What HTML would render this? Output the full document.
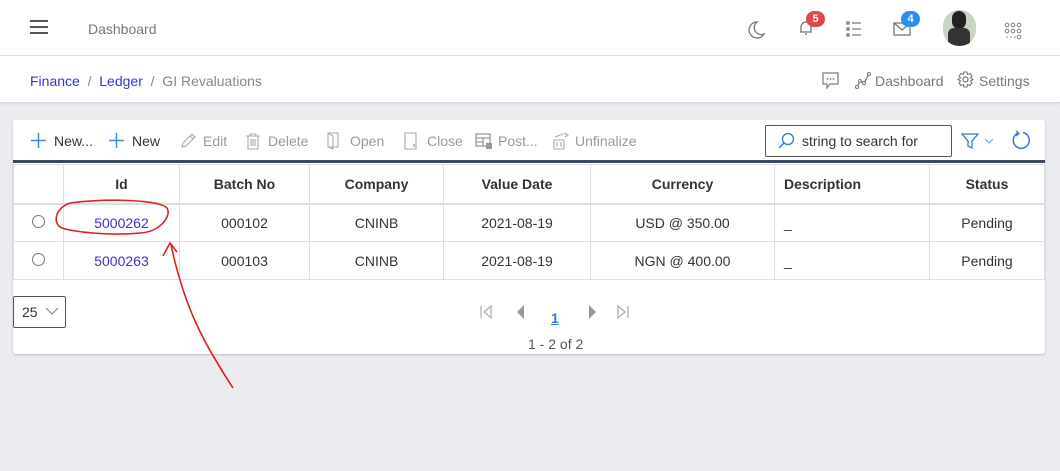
<!DOCTYPE html>
<html><head><meta charset="utf-8"><style>
*{box-sizing:border-box;margin:0;padding:0}
body{width:1060px;height:471px;background:#ebecef;font-family:"Liberation Sans",sans-serif;position:relative;overflow:hidden;color:#333}
.top{position:absolute;left:0;top:0;width:1060px;height:56px;background:#fff;border-bottom:1px solid #ddd}
.bc{position:absolute;left:0;top:56px;width:1060px;height:47px;background:#fff;border-bottom:1px solid #d5d7dc;box-shadow:0 1px 2px rgba(0,0,0,.08)}
.t{position:absolute;white-space:nowrap;font-size:14px}
.card{position:absolute;left:13px;top:120px;width:1032px;height:234px;background:#fff;border-radius:3px;box-shadow:0 1px 2px rgba(0,0,0,.2)}
table{position:absolute;left:0;top:44px;border-collapse:collapse;font-size:14px}
td,th{border:1px solid #dcdee3;text-align:center;height:38px}
th{font-weight:bold;color:#333;height:39px;border-bottom:2px solid #dcdee3}
.tb{color:#999;font-size:14px;top:13px}
.ic{position:absolute;top:12px}
</style></head><body>
<div class="top">
 <div style="position:absolute;left:30px;top:20px;width:18px;height:2px;background:#555;box-shadow:0 6px 0 #555,0 12px 0 #555"></div>
 <div class="t" style="left:88px;top:21px;color:#777">Dashboard</div>
 <svg style="position:absolute;left:748px;top:20px" width="18" height="20" viewBox="0 0 18 20"><path d="M9 2 A8 8 0 1 0 16 14 A7 7 0 0 1 9 2Z" fill="none" stroke="#777" stroke-width="1.3"/></svg>
 <svg style="position:absolute;left:797px;top:18px" width="18" height="20" viewBox="0 0 18 20"><path d="M4 14 V9 A5 5 0 0 1 14 9 V14 H3 M8 16 H10" fill="none" stroke="#777" stroke-width="1.3"/></svg>
 <div style="position:absolute;left:806px;top:11px;width:19px;height:16px;border-radius:8px;background:#e0474c;color:#fff;font-size:11px;text-align:center;line-height:16px;font-weight:bold">5</div>
 <svg style="position:absolute;left:846px;top:20px" width="16" height="18" viewBox="0 0 16 18"><g stroke="#777" stroke-width="1.3" fill="none"><rect x="1" y="2" width="2" height="2"/><rect x="1" y="8" width="2" height="2"/><rect x="1" y="14" width="2" height="2"/><path d="M6 3H15M6 9H15M6 15H15"/></g></svg>
 <svg style="position:absolute;left:893px;top:20px" width="18" height="16" viewBox="0 0 18 16"><rect x="1" y="3" width="16" height="12" fill="none" stroke="#777" stroke-width="1.3"/><path d="M1 3 L9 10 L17 3" fill="none" stroke="#777" stroke-width="1.3"/></svg>
 <div style="position:absolute;left:901px;top:11px;width:19px;height:16px;border-radius:8px;background:#2e8cf0;color:#fff;font-size:11px;text-align:center;line-height:16px;font-weight:bold">4</div>
 <div style="position:absolute;left:943px;top:10px;width:33px;height:36px;border-radius:16px;background:#c7d6c2;overflow:hidden"><div style="position:absolute;left:9px;top:1px;width:14px;height:18px;border-radius:7px;background:#222"></div><div style="position:absolute;left:5px;top:18px;width:22px;height:20px;background:#333;border-radius:6px 6px 0 0"></div></div>
 <svg style="position:absolute;left:1004px;top:22px" width="20" height="18"><g fill="none" stroke="#888" stroke-width="1.1"><circle cx="3" cy="3" r="1.8"/><circle cx="9" cy="3" r="1.8"/><circle cx="15" cy="3" r="1.8"/><circle cx="3" cy="9" r="1.8"/><circle cx="9" cy="9" r="1.8"/><circle cx="15" cy="9" r="1.8"/><circle cx="15" cy="15" r="1.8"/></g><g fill="#888"><circle cx="3" cy="15" r=".8"/><circle cx="7" cy="15" r=".8"/><circle cx="11" cy="15" r=".8"/></g></svg>
</div>
<div class="bc">
 <div class="t" style="left:30px;top:17px"><span style="color:#3a30d6">Finance</span><span style="color:#888"> &nbsp;/&nbsp; </span><span style="color:#3a30d6">Ledger</span><span style="color:#888"> &nbsp;/&nbsp; GI Revaluations</span></div>
 <svg style="position:absolute;left:822px;top:16px" width="17" height="18"><path d="M1 1H16V12H8L5 16V12H1Z" fill="none" stroke="#777" stroke-width="1.2"/><g fill="#777"><circle cx="5.5" cy="7" r=".9"/><circle cx="8.5" cy="7" r=".9"/><circle cx="11.5" cy="7" r=".9"/></g></svg>
 <svg style="position:absolute;left:855px;top:16px" width="17" height="17"><path d="M2 15 L5 9 L9 11 L14 2" fill="none" stroke="#777" stroke-width="1.2"/><g fill="#fff" stroke="#777"><circle cx="2" cy="15" r="1.5"/><circle cx="5" cy="9" r="1.5"/><circle cx="9" cy="11" r="1.5"/><circle cx="14" cy="2" r="1.5"/></g></svg>
 <div class="t" style="left:875px;top:17px;color:#777">Dashboard</div>
 <svg style="position:absolute;left:957px;top:15px" width="17" height="17" viewBox="0 0 17 17"><circle cx="8.5" cy="8.5" r="2.5" fill="none" stroke="#777" stroke-width="1.2"/><path d="M7 1H10L10.5 3.5L13 2.5L15 5L13.5 7L16 8.5L13.5 10L15 12L13 14.5L10.5 13.5L10 16H7L6.5 13.5L4 14.5L2 12L3.5 10L1 8.5L3.5 7L2 5L4 2.5L6.5 3.5Z" fill="none" stroke="#777" stroke-width="1.1"/></svg>
 <div class="t" style="left:979px;top:17px;color:#777">Settings</div>
</div>
<div class="card">
 <svg class="ic" style="left:17px" width="17" height="17"><path d="M8.5 1V16M1 8.5H16" stroke="#3a8ee6" stroke-width="1.5"/></svg>
 <div class="t tb" style="left:41px;color:#333">New...</div>
 <svg class="ic" style="left:95px" width="17" height="17"><path d="M8.5 1V16M1 8.5H16" stroke="#3a8ee6" stroke-width="1.5"/></svg>
 <div class="t tb" style="left:119px;color:#333">New</div>
 <svg class="ic" style="left:166px" width="18" height="18"><path d="M3 15L4 11L13 2L16 5L7 14Z M11 4L14 7" fill="none" stroke="#aaa" stroke-width="1.1"/></svg>
 <div class="t tb" style="left:190px">Edit</div>
 <svg class="ic" style="left:232px" width="16" height="18"><path d="M1 4H15M5 4V2H11V4M3 4V17H13V4M6 7V14M8 7V14M10 7V14" fill="none" stroke="#aaa" stroke-width="1.1"/></svg>
 <div class="t tb" style="left:255px">Delete</div>
 <svg class="ic" style="left:313px" width="16" height="18"><path d="M2 1H12V15H2Z M2 1L7 4V17L2 15" fill="none" stroke="#aaa" stroke-width="1.1"/></svg>
 <div class="t tb" style="left:337px">Open</div>
 <svg class="ic" style="left:390px" width="16" height="18"><path d="M2 1H13V17H2Z" fill="none" stroke="#aaa" stroke-width="1.1"/><path d="M11 12V15" stroke="#aaa" stroke-width="1.5"/></svg>
 <div class="t tb" style="left:414px">Close</div>
 <svg class="ic" style="left:462px" width="18" height="18"><path d="M1 2H15V14H1Z M1 6H15 M8 6V14 M1 10H8" fill="none" stroke="#999" stroke-width="1.3"/><rect x="11" y="11" width="6" height="6" fill="#999"/></svg>
 <div class="t tb" style="left:485px">Post...</div>
 <svg class="ic" style="left:538px" width="18" height="18"><path d="M3 8H13V17H3Z M6 10V15M10 10V15 M4 5L12 2 M13 1L17 3L14 5" fill="none" stroke="#aaa" stroke-width="1.1"/></svg>
 <div class="t tb" style="left:562px">Unfinalize</div>
 <div style="position:absolute;left:752px;top:5px;width:187px;height:32px;border:1px solid #555;border-radius:2px"></div>
 <svg style="position:absolute;left:764px;top:12px" width="18" height="18"><circle cx="11" cy="7" r="5.5" fill="none" stroke="#2e7ad6" stroke-width="1.3"/><path d="M7 11 L2 16" stroke="#2e7ad6" stroke-width="1.5"/></svg>
 <div class="t" style="left:789px;top:13px;color:#333">string to search for</div>
 <svg style="position:absolute;left:948px;top:12px" width="40" height="18"><path d="M1 2H17L11 9V16L7 14V9Z" fill="none" stroke="#2e7ad6" stroke-width="1.3"/><path d="M24 7L28 11L32 7" fill="none" stroke="#7aa9e6" stroke-width="1.2"/></svg>
 <svg style="position:absolute;left:998px;top:10px" width="20" height="20"><path d="M7 3 A8 8 0 1 0 12 2.5" fill="none" stroke="#2e7ad6" stroke-width="1.5"/><path d="M5 1 L8 3.5 L5 6" fill="none" stroke="#2e7ad6" stroke-width="1.3"/></svg>
 <div style="position:absolute;left:0;top:40px;width:1032px;height:3px;background:#3b4a62"></div>
 <table>
  <tr><th style="width:50px"></th><th style="width:116px">Id</th><th style="width:130px">Batch No</th><th style="width:134px">Company</th><th style="width:147px">Value Date</th><th style="width:184px">Currency</th><th style="width:155px;text-align:left;padding-left:9px">Description</th><th style="width:115px">Status</th></tr>
  <tr><td><span style="display:inline-block;width:13px;height:13px;border:1px solid #777;border-radius:50%"></span></td><td style="color:#3a30d6">5000262</td><td>000102</td><td>CNINB</td><td>2021-08-19</td><td>USD @ 350.00</td><td style="text-align:left;padding-left:9px">_</td><td>Pending</td></tr>
  <tr><td><span style="display:inline-block;width:13px;height:13px;border:1px solid #777;border-radius:50%"></span></td><td style="color:#3a30d6">5000263</td><td>000103</td><td>CNINB</td><td>2021-08-19</td><td>NGN @ 400.00</td><td style="text-align:left;padding-left:9px">_</td><td>Pending</td></tr>
 </table>
 <div style="position:absolute;left:0;top:176px;width:53px;height:32px;border:1px solid #555;border-radius:2px"></div>
 <div class="t" style="left:9px;top:184px">25</div>
 <svg style="position:absolute;left:32px;top:186px" width="14" height="10"><path d="M1 2L7 8L13 2" fill="none" stroke="#888" stroke-width="1.1"/></svg>
 <svg style="position:absolute;left:466px;top:184px" width="160" height="16"><path d="M2 2V14M12 2L5 8L12 14Z" fill="none" stroke="#aaa" stroke-width="1.2"/><path d="M45 1L38 8L45 15Z" fill="#999"/><path d="M110 1L117 8L110 15Z" fill="#999"/><path d="M139 2L146 8L139 14ZM149 2V14" fill="none" stroke="#aaa" stroke-width="1.2"/></svg>
 <div class="t" style="left:538px;top:190px;color:#2e7ad6;font-weight:bold;text-decoration:underline">1</div>
 <div class="t" style="left:515px;top:216px;color:#555">1 - 2 of 2</div>
</div>
<svg style="position:absolute;left:0;top:0" width="1060" height="471"><g fill="none" stroke="#e02020" stroke-width="1.6">
 <path d="M70 203 C110 198 160 200 167 208 C172 216 160 232 140 233 C110 236 75 232 62 228 C52 224 55 208 70 203"/>
 <path d="M233 388 C205 345 185 310 171 245"/>
 <path d="M163 256 L170 243 L177 252"/>
</g></svg>
</body></html>
